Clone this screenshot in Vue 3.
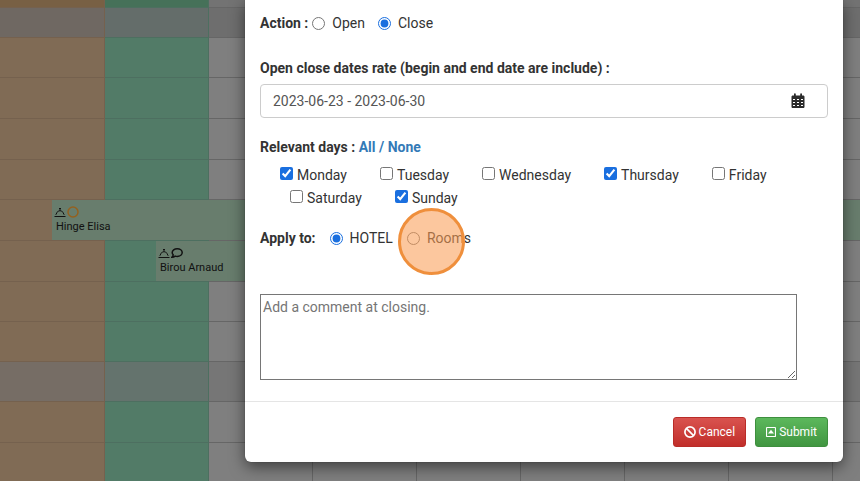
<script setup>
import { ref } from 'vue'

const rows = ['head', 'group', 'room', 'room', 'room', 'room', 'room', 'room', 'room', 'room', 'group light', 'room', 'room', 'room']
const columns = ['saturday', 'sunday', 'day', 'day', 'day', 'day', 'day', 'day', 'day']

const action = ref('close')
const target = ref('hotel')
const range = ref('2023-06-23 - 2023-06-30')
const comment = ref('')
const days = ref([
  { name: 'Monday', on: true },
  { name: 'Tuesday', on: false },
  { name: 'Wednesday', on: false },
  { name: 'Thursday', on: true },
  { name: 'Friday', on: false },
  { name: 'Saturday', on: false },
  { name: 'Sunday', on: true }
])

function toggleAll() {
  const next = !days.value.every((day) => day.on)
  days.value.forEach((day) => { day.on = next })
}
</script>

<template>
  <div class="page">
    <div class="planning">
      <div v-for="(row, r) in rows" :key="r" class="row" :class="row">
        <div v-for="(column, c) in columns" :key="c" class="cell" :class="column"></div>
      </div>
      <div class="booking elisa">
        <div class="marks">
          <svg width="12" height="12" viewBox="0 0 12 12" fill="none" stroke="currentColor">
            <path d="M.5 10.500h11M1.800 8.800L3.200 6.200Q4 4.700 6 4.700T8.800 6.200L10.200 8.800M6 4.500V2.500M5 2.500h2" />
          </svg>
          <svg width="12" height="12" viewBox="0 0 12 12" fill="none" stroke="#94611f" stroke-width="1.500">
            <circle cx="6" cy="6" r="5" />
          </svg>
        </div>
        <span>Hinge Elisa</span>
      </div>
      <div class="booking arnaud">
        <div class="marks">
          <svg width="12" height="12" viewBox="0 0 12 12" fill="none" stroke="currentColor">
            <path d="M.5 10.500h11M1.800 8.800L3.200 6.200Q4 4.700 6 4.700T8.800 6.200L10.200 8.800M6 4.500V2.500M5 2.500h2" />
          </svg>
          <svg width="12" height="12" viewBox="0 0 12 12" fill="none" stroke="currentColor" stroke-width="1.500">
            <path d="M6.200 1.700c2.800 0 5 1.600 5 3.800s-2.200 3.900-5 3.900c-.7 0-1.400-.1-2-.3-.8.6-1.800 1.100-3.300 1.100.7-.7 1.200-1.500 1.300-2.400C1.600 7.200 1.200 6.400 1.200 5.500c0-2.200 2.200-3.800 5-3.800z" />
          </svg>
        </div>
        <span>Birou Arnaud</span>
      </div>
    </div>

    <form class="modal" @submit.prevent>
      <div class="body">
        <div class="choices action" role="radiogroup" aria-labelledby="action-label">
          <strong id="action-label">Action :</strong>
          <label><input v-model="action" type="radio" name="action" value="open" />Open</label>
          <label><input v-model="action" type="radio" name="action" value="close" />Close</label>
        </div>

        <label class="title" for="range">Open close dates rate (begin and end date are include) :</label>
        <div class="field">
          <input id="range" v-model="range" type="text" />
          <svg width="14" height="16" viewBox="0 0 14 16">
            <path fill="#2b2b2b" d="M3 1.200a.8.8 0 0 1 1.800 0V2.500h4.400V1.200a.8.8 0 0 1 1.800 0V2.500h1.200c.7 0 1.300.6 1.300 1.300v9.900c0 .7-.6 1.300-1.300 1.300H1.800C1.100 15 .5 14.400.5 13.700V3.800c0-.7.6-1.300 1.300-1.300H3z" />
            <path fill="#fff" d="M2 6h2v1H2zM6 6h2v1H6zM10 6h2v1h-2zM2 9h2v1H2zM6 9h2v1H6zM10 9h2v1h-2zM2 12h2v1H2zM6 12h2v1H6zM10 12h2v1h-2z" />
          </svg>
        </div>

        <div class="title days-title">Relevant days : <a href="#" @click.prevent="toggleAll">All / None</a></div>
        <div class="days">
          <label v-for="day in days" :key="day.name"><input v-model="day.on" type="checkbox" />{{ day.name }}</label>
        </div>

        <div class="choices target" role="radiogroup" aria-labelledby="target-label">
          <strong id="target-label">Apply to:</strong>
          <label><input v-model="target" type="radio" name="target" value="hotel" />HOTEL</label>
          <label class="rooms"><input v-model="target" type="radio" name="target" value="rooms" />Rooms<i class="pointer"></i></label>
        </div>

        <textarea v-model="comment" placeholder="Add a comment at closing." aria-label="Comment"></textarea>
      </div>

      <div class="footer">
        <button type="button" class="cancel">
          <svg width="12" height="12" viewBox="0 0 12 12" fill="none" stroke="currentColor" stroke-width="1.700">
            <circle cx="6" cy="6" r="5.100" />
            <path d="M2.400 2.400l7.200 7.200" />
          </svg>
          Cancel
        </button>
        <button type="submit" class="submit">
          <svg width="10" height="12" viewBox="0 0 10 12">
            <rect x=".5" y="1.500" width="9" height="9" rx=".6" fill="none" stroke="currentColor" stroke-width="1.200" />
            <path d="M5 3.800L8 7.500H2z" fill="currentColor" />
          </svg>
          Submit
        </button>
      </div>
    </form>
  </div>
</template>

<style>
body {
  margin: 0;
}
</style>

<style scoped>
* {
  box-sizing: border-box;
}

.page {
  position: relative;
  min-height: 100vh;
  overflow: hidden;
  background: #7f7f7f;
  color: #333;
  font: 14px/20px Roboto, sans-serif;
}

.planning {
  position: absolute;
  inset: 0;
  overflow: hidden;
  display: grid;
  grid-template-rows: 8px 30px 40px 41px 41px 40px 41px 41px 40px 40px 40px 41px 41px 41px;
}

.row {
  grid-column: 1;
  display: grid;
  grid-template-columns: 105px repeat(8, 104px);
}

.cell {
  background: #7f7f7f;
  border-right: 1px solid #666;
  border-bottom: 1px solid #666;
}

.saturday {
  background: #806b55;
  border-color: #75614e;
}

.sunday {
  background: #527b67;
  border-color: #4d6f60;
}

.head .cell {
  background: #737373;
}

.head .saturday {
  background: #786044;
}

.head .sunday {
  background: #467159;
}

.group .cell {
  background: #6e6e6e;
}

.group .saturday {
  background: #6f6862;
}

.group .sunday {
  background: #646d6a;
}

.group.light .cell {
  background: #767676;
}

.group.light .saturday {
  background: #766d65;
}

.group.light .sunday {
  background: #64736d;
}

.booking {
  grid-column: 1;
  margin-bottom: 1px;
  padding: 6px 2px;
  background: #687d6d;
  color: #111;
  font-size: 11px;
  line-height: 18px;
}

.elisa {
  grid-row: 7;
  margin-left: 52px;
}

.arnaud {
  grid-row: 8;
  width: 260px;
  margin-left: 156px;
}

.row:nth-child(1) { grid-row: 1; }
.row:nth-child(2) { grid-row: 2; }
.row:nth-child(3) { grid-row: 3; }
.row:nth-child(4) { grid-row: 4; }
.row:nth-child(5) { grid-row: 5; }
.row:nth-child(6) { grid-row: 6; }
.row:nth-child(7) { grid-row: 7; }
.row:nth-child(8) { grid-row: 8; }
.row:nth-child(9) { grid-row: 9; }
.row:nth-child(10) { grid-row: 10; }
.row:nth-child(11) { grid-row: 11; }
.row:nth-child(12) { grid-row: 12; }
.row:nth-child(13) { grid-row: 13; }
.row:nth-child(14) { grid-row: 14; }

.marks {
  display: flex;
  gap: 1px;
}

.booking span {
  display: block;
  padding-left: 2px;
}

.modal {
  position: relative;
  margin: 0 17px 0 245px;
  background: #fff;
  border-radius: 0 0 6px 6px;
  box-shadow: 0 5px 15px rgba(0, 0, 0, 0.5), 0 0 1px rgba(0, 0, 0, 0.5);
}

.body {
  padding: 13px 15px 21px;
}

strong,
.title {
  font-weight: 700;
}

input {
  margin: 0;
  accent-color: #1a6fdf;
}

.choices {
  display: flex;
}

.choices label {
  display: flex;
  align-items: center;
  gap: 7px;
}

.action {
  gap: 13px;
}

.action strong {
  margin-right: -9px;
}

.title {
  display: block;
  margin-top: 25px;
}

.field {
  display: flex;
  align-items: center;
  height: 34px;
  margin-top: 6px;
  padding: 0 22px 0 12px;
  border: 1px solid #ccc;
  border-radius: 4px;
}

.field input {
  flex: 1;
  min-width: 0;
  padding: 0;
  border: 0;
  outline: 0;
  background: none;
  color: #555;
  font: inherit;
}

.days-title {
  margin-top: 19px;
}

a {
  color: #337ab7;
  text-decoration: none;
}

.days {
  display: flex;
  flex-wrap: wrap;
  gap: 3px;
  margin-top: 8px;
}

.days label {
  display: flex;
  align-items: flex-start;
  gap: 4px;
  padding-left: 20px;
}

.days input {
  margin-top: 2px;
}

.days label + label {
  margin-left: 10px;
}

.target {
  gap: 14px;
  margin-top: 20px;
}

.rooms {
  position: relative;
}

.pointer {
  position: absolute;
  top: -20px;
  left: -9px;
  width: 67px;
  height: 67px;
  border: 3px solid #ef8f3c;
  border-radius: 50%;
  background: rgba(249, 157, 84, 0.57);
  pointer-events: none;
}

textarea {
  display: block;
  width: calc(100% - 31px);
  height: 86px;
  margin-top: 46px;
  padding: 2px;
  border: 1px solid #767676;
  background: #fff;
  color: inherit;
  font: inherit;
}

textarea::placeholder {
  color: #757575;
}

.footer {
  display: flex;
  justify-content: flex-end;
  gap: 9px;
  padding: 15px;
  border-top: 1px solid #e5e5e5;
}

button {
  display: flex;
  align-items: center;
  gap: 3px;
  height: 30px;
  padding: 0 10px;
  border: 1px solid #b92c28;
  border-radius: 3px;
  color: #fff;
  font: 12px/18px Roboto, sans-serif;
}

.cancel {
  background: linear-gradient(#d9534f, #c12e2a);
}

.submit {
  background: linear-gradient(#5cb85c, #419641);
  border-color: #3e8f3e;
}
</style>
